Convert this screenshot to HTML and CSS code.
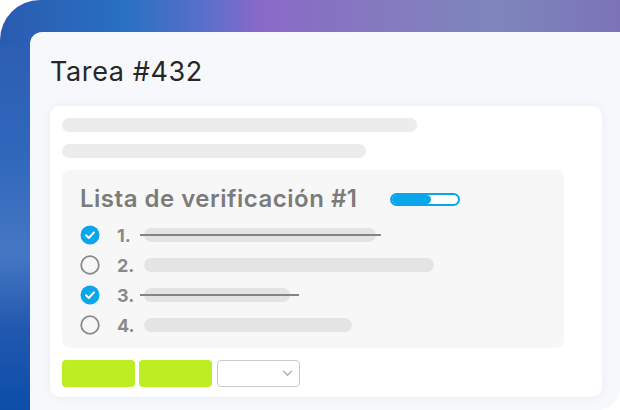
FILE: index.html
```html
<!DOCTYPE html>
<html lang="es">
<head>
    <meta charset="UTF-8">
    <meta name="viewport" content="width=device-width, initial-scale=1.0">
    <title>Tarea #432</title>
    <link rel="stylesheet" href="styles.css">
</head>
<body>

    <div class="stage">
        <div class="window">
            <h1 class="task-title">Tarea #432</h1>

            <div class="task-card">
                <div class="skeleton skeleton-wide"></div>
                <div class="skeleton skeleton-mid"></div>

                <!-- Lista de verificación -->
                <div class="checklist">
                    <div class="checklist-head">
                        <h2>Lista de verificación #1</h2>
                        <div class="progress"><div class="progress-fill" style="width: 60%"></div></div>
                    </div>

                    <div class="check-row done">
                        <svg class="check" viewBox="0 0 20 20"><circle cx="10" cy="10" r="9.5" fill="#0aa6ec"/><path d="M6 10.3l2.8 2.7 5.2-5.6" fill="none" stroke="#fff" stroke-width="2" stroke-linecap="round" stroke-linejoin="round"/></svg>
                        <span class="num">1.</span>
                        <span class="line-bar" style="width: 232px"></span>
                    </div>
                    <div class="check-row">
                        <svg class="check" viewBox="0 0 20 20"><circle cx="10" cy="10" r="8.8" fill="none" stroke="#8a8a8a" stroke-width="1.8"/></svg>
                        <span class="num">2.</span>
                        <span class="line-bar" style="width: 290px"></span>
                    </div>
                    <div class="check-row done">
                        <svg class="check" viewBox="0 0 20 20"><circle cx="10" cy="10" r="9.5" fill="#0aa6ec"/><path d="M6 10.3l2.8 2.7 5.2-5.6" fill="none" stroke="#fff" stroke-width="2" stroke-linecap="round" stroke-linejoin="round"/></svg>
                        <span class="num">3.</span>
                        <span class="line-bar long-strike" style="width: 146px"></span>
                    </div>
                    <div class="check-row">
                        <svg class="check" viewBox="0 0 20 20"><circle cx="10" cy="10" r="8.8" fill="none" stroke="#8a8a8a" stroke-width="1.8"/></svg>
                        <span class="num">4.</span>
                        <span class="line-bar" style="width: 208px"></span>
                    </div>
                </div>

                <div class="actions">
                    <button class="btn-green"></button>
                    <button class="btn-green"></button>
                    <div class="select-box">
                        <svg viewBox="0 0 12 8" class="chevron"><path d="M1.5 1.5l4.5 4.5 4.5-4.5" fill="none" stroke="#b0b0b0" stroke-width="1.6" stroke-linecap="round" stroke-linejoin="round"/></svg>
                    </div>
                </div>
            </div>
        </div>
    </div>

</body>
</html>
```

FILE: styles.css
```css
/* Paleta */
:root {
    --azul-check: #0aa6ec;
    --verde-btn: #bdee23;
    --fundo-janela: #f6f8fb;
    --fundo-lista: #f7f7f7;
    --skeleton: #ececec;
    --texto-cinza: #7b7b7b;
}

* {
    box-sizing: border-box;
}

body {
    margin: 0;
    background-color: #ffffff;
    font-family: "Inter", "Noto Sans", sans-serif;
}

/* --- Fundo em degradê (só aparece em cima e à esquerda) --- */
.stage {
    width: 620px;
    height: 410px;
    padding: 32px 0 0 30px;
    border-top-left-radius: 40px;
    background:
        linear-gradient(90deg, #2a5bb1 0%, #2870c0 20%, #5a6fcb 33%, #8a69c8 42%, #8577c0 58%, #7e86bc 80%, #7b73b7 100%) top left / 100% 46px no-repeat,
        linear-gradient(180deg, #2a5bb1 0%, #2f66bb 35%, #4477c3 62%, #2258b0 80%, #0c4ea8 100%) top left / 44px 100% no-repeat;
}

.window {
    height: 100%;
    background-color: var(--fundo-janela);
    border-radius: 12px 0 22px 0;
    padding: 24px 18px 0 20px;
}

.task-title {
    margin: 0 0 18px;
    font-size: 27px;
    line-height: 32px;
    font-weight: 400;
    letter-spacing: 0.6px;
    color: #262626;
}

/* --- Cartão principal --- */
.task-card {
    background-color: #ffffff;
    border-radius: 10px;
    box-shadow: 0 0 12px rgba(40, 60, 90, 0.05);
    padding: 12px 12px 10px;
    display: flex;
    flex-direction: column;
    align-items: flex-start;
    gap: 12px;
}

.skeleton {
    height: 14px;
    border-radius: 7px;
    background-color: var(--skeleton);
}

.skeleton-wide { width: 355px; }
.skeleton-mid { width: 304px; }

/* --- Lista de verificação --- */
.checklist {
    width: 502px;
    background-color: var(--fundo-lista);
    border-radius: 8px;
    padding: 14px 18px 8px;
}

.checklist-head {
    display: flex;
    align-items: center;
    gap: 32px;
    margin-bottom: 6px;
}

.checklist-head h2 {
    margin: 0;
    font-size: 24px;
    line-height: 30px;
    font-weight: 600;
    letter-spacing: 0.5px;
    color: var(--texto-cinza);
}

.progress {
    width: 70px;
    height: 13px;
    border: 2px solid var(--azul-check);
    border-radius: 7px;
    overflow: hidden;
    background-color: #ffffff;
}

.progress-fill {
    height: 100%;
    background-color: var(--azul-check);
    border-radius: 0 5px 5px 0;
}

.check-row {
    display: flex;
    align-items: center;
    height: 30px;
}

.check {
    width: 20px;
    height: 20px;
    margin-right: 17px;
    flex-shrink: 0;
}

.num {
    width: 27px;
    font-size: 18px;
    font-weight: 700;
    color: #8a8a8a;
}

.line-bar {
    position: relative;
    height: 14px;
    border-radius: 7px;
    background-color: #e4e4e4;
}

.check-row.done .line-bar::after {
    content: "";
    position: absolute;
    left: -4px;
    right: -5px;
    top: 6px;
    height: 2px;
    background-color: #858585;
}

.check-row.done .long-strike::after {
    right: -9px;
}

/* --- Botões --- */
.actions {
    display: flex;
    gap: 4px;
}

.btn-green {
    width: 73px;
    height: 27px;
    border: none;
    border-radius: 4px;
    background-color: var(--verde-btn);
    padding: 0;
}

.select-box {
    width: 83px;
    height: 27px;
    margin-left: 1px;
    border: 1px solid #c9c9c9;
    border-radius: 4px;
    background-color: #ffffff;
    display: flex;
    align-items: center;
    justify-content: flex-end;
    padding-right: 6px;
}

.chevron {
    width: 11px;
    height: 7px;
}
```
